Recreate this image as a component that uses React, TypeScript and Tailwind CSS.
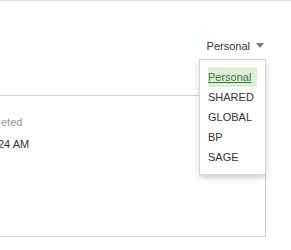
const ITEMS = ["Personal", "SHARED", "GLOBAL", "BP", "SAGE"];

export default function App() {
  return (
    <div
      className="relative h-[250px] w-[291px] overflow-hidden border-t border-[#dedede] bg-white text-[11px] text-[#333]"
      style={{ fontFamily: '"Liberation Sans", Arial, sans-serif' }}
    >
      <div className="mt-[35px] flex h-5 items-center justify-end pr-[27px] leading-5">
        <span>Personal</span>
        <svg width="8" height="5" viewBox="0 0 8 5" className="ml-[6px] mb-px">
          <path d="M0 0h8L4 5z" fill="#777" />
        </svg>
      </div>

      <div className="ml-[-20px] mr-[25px] mt-[39px] h-[142px] border border-[#d0d0d0] pl-5 pt-[18px]">
        <div className="mb-[6px] leading-4 text-[#999]">eted</div>
        <div className="-ml-[3px] leading-4">24 AM</div>
      </div>

      <div className="absolute left-[199px] top-[58px] w-[67px] border border-[#d6d6d6] bg-white px-2 py-[7px] shadow-[0_3px_6px_rgba(0,0,0,0.18)]">
        {ITEMS.map((item, i) => (
          <div
            key={item}
            className={
              i === 0
                ? "h-5 bg-[#dff0d8] leading-5 text-[#3c763d] underline"
                : "h-5 leading-5"
            }
          >
            {item}
          </div>
        ))}
      </div>
    </div>
  );
}
